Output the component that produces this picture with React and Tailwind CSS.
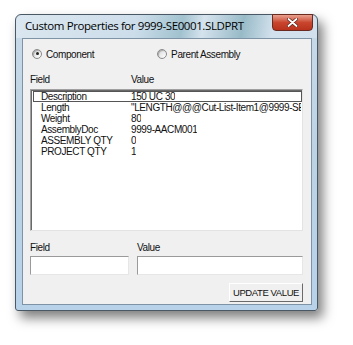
import React from "react";

function Radio({ checked }) {
  return (
    <span className="relative inline-block w-[10px] h-[10px] rounded-full border border-[#8a8a8a] bg-gradient-to-br from-[#d8d8d8] to-white shadow-[inset_1px_1px_1px_rgba(0,0,0,0.25)]">
      {checked && (
        <span className="absolute left-[2.5px] top-[2.5px] w-[3px] h-[3px] rounded-full bg-[#222]" />
      )}
    </span>
  );
}

const rows = [
  ["Description", "150 UC 30"],
  ["Length", "\"LENGTH@@@Cut-List-Item1@9999-SE0001.SLDPRT\""],
  ["Weight", "80"],
  ["AssemblyDoc", "9999-AACM001"],
  ["ASSEMBLY QTY", "0"],
  ["PROJECT QTY", "1"],
];

export default function App() {
  const ui = { fontFamily: '"Liberation Sans", Arial, sans-serif' };
  return (
    <div className="w-[353px] h-[345px] bg-white pl-[15px] pt-[14px]" style={ui}>
      <div className="relative w-[303px] h-[297px] rounded-t-[6px] rounded-b-[3px] border border-[#4a5866] bg-gradient-to-b from-[#c8dae8] via-[#bcd3e4] to-[#b8d2ea] shadow-[5px_7px_12px_rgba(0,0,0,0.5)] flex flex-col">
        {/* title bar */}
        <div className="h-[23px] flex items-start relative">
          <div className="absolute inset-0 rounded-t-[6px] bg-[linear-gradient(100deg,rgba(255,255,255,0.35)_0%,rgba(255,255,255,0.1)_40%,rgba(90,150,160,0.35)_55%,rgba(255,255,255,0.25)_62%,rgba(80,140,150,0.4)_75%,rgba(255,255,255,0.2)_85%)]" />
          <span
            className="relative ml-[9px] mt-[3px] text-[11.5px] leading-[16px] text-black"
            style={{ fontFamily: '"Open Sans", "Noto Sans", sans-serif', letterSpacing: "-0.4px" }}
          >
            Custom Properties for 9999-SE0001.SLDPRT
          </span>
          <div className="absolute right-[4px] top-[-1px] w-[41px] h-[17px] rounded-b-[4px] border border-[#6b2a20] bg-gradient-to-b from-[#e8a08f] via-[#c9452e] to-[#b8321c] flex items-center justify-center">
            <svg width="11" height="9" viewBox="0 0 11 9">
              <path d="M1.5 1 L9.5 8 M9.5 1 L1.5 8" stroke="#5a2018" strokeWidth="3.2" strokeLinecap="round" />
              <path d="M1.5 1 L9.5 8 M9.5 1 L1.5 8" stroke="#ffffff" strokeWidth="1.8" strokeLinecap="round" />
            </svg>
          </div>
        </div>
        {/* client area */}
        <div className="ml-[6px] mr-[5px] mb-[5px] flex-1 border border-[#7f93a6] bg-[#f0f0f0] flex flex-col pl-[7px] pr-[8px] text-[10px] text-[#111]" style={{ letterSpacing: "-0.4px" }}>
          <div className="mt-[10px] h-[12px] flex items-center">
            <span className="ml-[2px]"><Radio checked /></span>
            <span className="ml-[4px] leading-[12px]">Component</span>
            <span className="ml-[63px]"><Radio /></span>
            <span className="ml-[4px] leading-[12px]">Parent Assembly</span>
          </div>
          <div className="mt-[13px] h-[12px] flex items-center leading-[12px]">
            <span className="w-[101px]">Field</span>
            <span>Value</span>
          </div>
          <div className="mt-[3px] h-[142px] border border-t-[#a0a0a0] border-l-[#a0a0a0] border-r-[#e3e3e3] border-b-[#e3e3e3] bg-white overflow-hidden">
            <div className="border-t border-l border-t-[#696969] border-l-[#696969] h-full pl-[1px]">
              {rows.map(([f, v], i) => (
                <div
                  key={f}
                  className={`h-[11px] flex items-center leading-[11px] whitespace-nowrap ${i === 0 ? "border border-[#555]" : "border border-transparent"}`}
                >
                  <span className="w-[97px] shrink-0 pl-[7px]">{f}</span>
                  <span className="overflow-hidden">{v}</span>
                </div>
              ))}
            </div>
          </div>
          <div className="mt-[11px] h-[12px] flex items-center leading-[12px]">
            <span className="w-[107px]">Field</span>
            <span>Value</span>
          </div>
          <div className="mt-[2px] flex gap-[8px]">
            <div className="w-[99px] h-[19px] bg-white border border-t-[#9a9a9a] border-l-[#9a9a9a] border-r-[#e6e6e6] border-b-[#e6e6e6]" />
            <div className="flex-1 h-[19px] bg-white border border-t-[#9a9a9a] border-l-[#9a9a9a] border-r-[#e6e6e6] border-b-[#e6e6e6]" />
          </div>
          <div className="mt-[8px] flex justify-end">
            <div className="w-[74px] h-[19px] border border-t-white border-l-white border-r-[#6a6a6a] border-b-[#6a6a6a] bg-[#f0f0f0] flex items-center justify-center text-[9.5px] leading-[12px]">
              UPDATE VALUE
            </div>
          </div>
        </div>
      </div>
    </div>
  );
}
